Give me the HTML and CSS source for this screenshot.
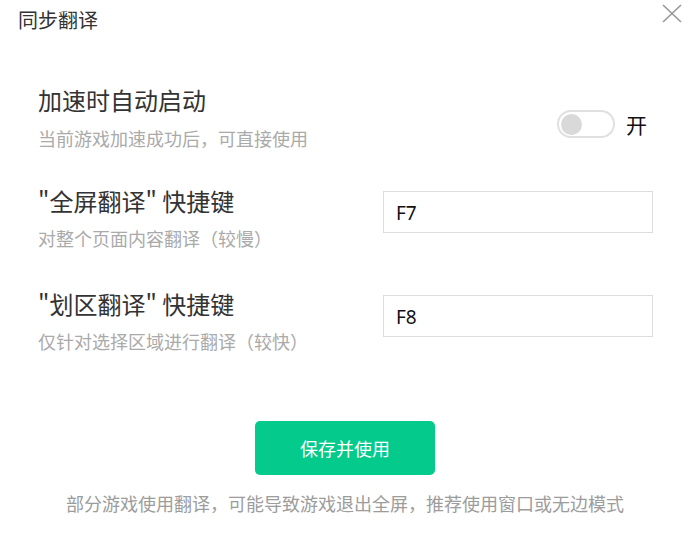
FILE: index.html
```html
<!DOCTYPE html>
<html lang="zh-CN">
<head>
<meta charset="utf-8">
<title>同步翻译</title>
<link rel="stylesheet" href="styles.css">
</head>
<body>
<div class="dialog">
  <div class="header">
    <div class="title">同步翻译</div>
    <svg class="close" viewBox="0 0 20 19" width="20" height="19">
      <path d="M1 1 L19 18 M19 1 L1 18" stroke="#9a9a9a" stroke-width="1.7" fill="none"/>
    </svg>
  </div>
  <div class="settings">
    <div class="row row-first">
      <div class="info">
        <div class="label">加速时自动启动</div>
        <div class="desc desc-first">当前游戏加速成功后，可直接使用</div>
      </div>
      <div class="switch-group">
        <div class="switch"><div class="knob"></div></div>
        <span class="switch-text">开</span>
      </div>
    </div>
    <div class="row row-second">
      <div class="info">
        <div class="label">"全屏翻译" 快捷键</div>
        <div class="desc">对整个页面内容翻译（较慢）</div>
      </div>
      <input class="hotkey" type="text" value="F7">
    </div>
    <div class="row row-third">
      <div class="info">
        <div class="label">"划区翻译" 快捷键</div>
        <div class="desc">仅针对选择区域进行翻译（较快）</div>
      </div>
      <input class="hotkey hotkey-third" type="text" value="F8">
    </div>
  </div>
  <div class="actions">
    <button class="save">保存并使用</button>
  </div>
  <div class="note">部分游戏使用翻译，可能导致游戏退出全屏，推荐使用窗口或无边模式</div>
</div>
</body>
</html>
```

FILE: styles.css
```css
html, body {
  margin: 0;
  padding: 0;
  background: #ffffff;
}
body {
  font-family: "Noto Sans CJK SC", "Noto Sans", sans-serif;
  color: #333333;
}
.dialog {
  width: 694px;
  height: 544px;
  overflow: hidden;
}
.header {
  display: flex;
  justify-content: space-between;
  align-items: flex-start;
  height: 30px;
  padding: 0 12px 0 18px;
}
.title {
  margin-top: 10px;
  font-size: 20px;
  line-height: 20px;
  color: #333333;
}
.close {
  display: block;
  margin-top: 4px;
}
.settings {
  padding: 0 41px 0 38px;
  margin-top: 58px;
}
.row {
  display: flex;
  justify-content: space-between;
  align-items: flex-start;
}
.row-second {
  margin-top: 42px;
}
.row-third {
  margin-top: 45px;
}
.label {
  font-size: 24px;
  line-height: 24px;
  color: #333333;
  white-space: nowrap;
}
.desc {
  margin-top: 16px;
  font-size: 18px;
  line-height: 18px;
  color: #aaaaaa;
  white-space: nowrap;
}
.desc-first {
  margin-top: 17px;
}
.switch-group {
  display: flex;
  align-items: center;
  margin-top: 22px;
  margin-right: 6px;
}
.switch {
  box-sizing: border-box;
  width: 58px;
  height: 28px;
  border: 2px solid #e0e0e0;
  border-radius: 14px;
  padding: 1px 2px;
  display: flex;
  align-items: center;
}
.knob {
  width: 21px;
  height: 21px;
  border-radius: 50%;
  background: #d9d9d9;
}
.switch-text {
  margin-left: 11px;
  font-size: 21px;
  line-height: 21px;
  color: #111111;
}
.hotkey {
  box-sizing: border-box;
  width: 270px;
  height: 42px;
  margin: 2px 0 0 0;
  border: 1px solid #dddddd;
  border-radius: 0;
  padding: 2px 0 0 12px;
  font-family: "Noto Sans", "Noto Sans CJK SC", sans-serif;
  font-size: 19px;
  color: #111111;
  background: #ffffff;
  outline: none;
}
.hotkey-third {
  margin-top: 3px;
}
.actions {
  display: flex;
  justify-content: center;
  margin-top: 71px;
  padding-right: 4px;
}
.save {
  width: 180px;
  height: 54px;
  border: none;
  border-radius: 5px;
  background: #04ca8c;
  color: #ffffff;
  font-family: "Noto Sans CJK SC", sans-serif;
  font-size: 18px;
  line-height: 18px;
  padding: 0;
}
.note {
  margin-top: 19px;
  padding-right: 4px;
  text-align: center;
  font-size: 18px;
  line-height: 19px;
  color: #9c9c9c;
  white-space: nowrap;
}
```
